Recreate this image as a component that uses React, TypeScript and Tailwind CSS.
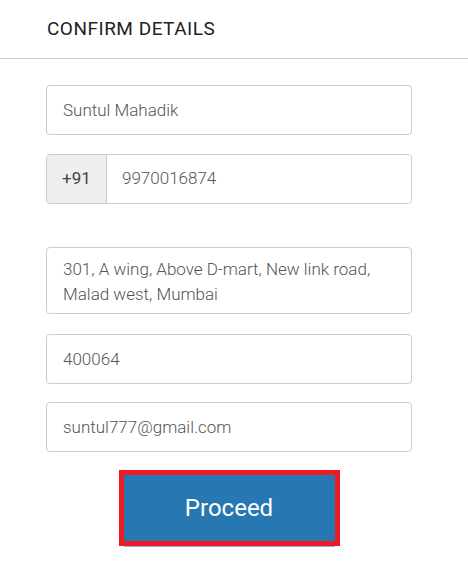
import { useState } from "react";

const fieldClass =
  "h-[50px] w-full rounded-[4px] border border-[#cccccc] bg-white px-4 text-[17px] font-light text-[#555555] outline-none";

export default function App() {
  const [name, setName] = useState("Suntul Mahadik");
  const [phone, setPhone] = useState("9970016874");
  const [address, setAddress] = useState(
    "301, A wing, Above D-mart, New link road, Malad west, Mumbai",
  );
  const [pincode, setPincode] = useState("400064");
  const [email, setEmail] = useState("suntul777@gmail.com");

  return (
    <div className="min-h-[584px] w-[468px] bg-white font-['Roboto',sans-serif]">
      <div className="flex h-[59px] items-center border-b border-[#cccccc] px-[47px] pt-px">
        <h1 className="text-[19px] font-normal tracking-[0.5px] text-[#222222]">CONFIRM DETAILS</h1>
      </div>

      <div className="ml-[46px] flex w-[366px] flex-col pt-[26px]">
        <input
          type="text"
          value={name}
          onChange={(e) => setName(e.target.value)}
          className={fieldClass}
        />

        <div className="mt-[19px] flex h-[50px] overflow-hidden rounded-[4px] border border-[#cccccc]">
          <span className="flex w-[60px] shrink-0 items-center border-r border-[#cccccc] bg-[#eeeeee] pl-[15px] text-[17px] font-normal text-[#444444]">
            +91
          </span>
          <input
            type="tel"
            value={phone}
            onChange={(e) => setPhone(e.target.value)}
            className="min-w-0 flex-1 bg-white px-[15px] text-[17px] font-light text-[#555555] outline-none"
          />
        </div>

        <textarea
          value={address}
          onChange={(e) => setAddress(e.target.value)}
          rows={2}
          className="mt-[43px] h-[67px] w-full resize-none rounded-[4px] border border-[#cccccc] bg-white px-4 pt-[9px] text-[17px] font-light leading-[25px] text-[#555555] outline-none"
        />

        <input
          type="text"
          value={pincode}
          onChange={(e) => setPincode(e.target.value)}
          className={`mt-5 ${fieldClass}`}
        />

        <input
          type="email"
          value={email}
          onChange={(e) => setEmail(e.target.value)}
          className={`mt-[18px] ${fieldClass}`}
        />

        <div className="flex justify-center pt-[23px]">
          <button
            type="button"
            className="h-[66px] w-[211px] bg-[#2777b3] text-[24px] font-normal text-white shadow-[0_6px_0_#8db5da] outline-[5px] outline-solid outline-[#ed1c24]"
          >
            Proceed
          </button>
        </div>
      </div>
    </div>
  );
}
